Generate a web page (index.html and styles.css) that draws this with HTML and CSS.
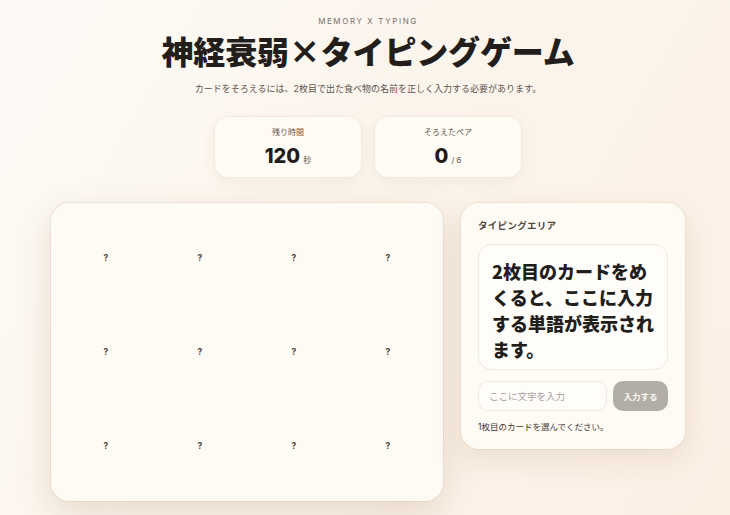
FILE: index.html
```html
<!DOCTYPE html>
<html lang="ja">
<head>
<meta charset="utf-8">
<title>神経衰弱×タイピングゲーム</title>
<link rel="stylesheet" href="styles.css">
</head>
<body>
<div class="page">
  <header class="header">
    <p class="eyebrow">MEMORY X TYPING</p>
    <h1 class="title">神経衰弱×タイピングゲーム</h1>
    <p class="lead">カードをそろえるには、2枚目で出た食べ物の名前を正しく入力する必要があります。</p>
  </header>

  <section class="stats">
    <div class="stat">
      <div class="stat-label">残り時間</div>
      <div class="stat-value">120<span class="stat-unit">秒</span></div>
    </div>
    <div class="stat">
      <div class="stat-label">そろえたペア</div>
      <div class="stat-value">0<span class="stat-unit">/ 6</span></div>
    </div>
  </section>

  <main class="layout">
    <section class="board">
      <div class="cell">?</div><div class="cell">?</div><div class="cell">?</div><div class="cell">?</div>
      <div class="cell">?</div><div class="cell">?</div><div class="cell">?</div><div class="cell">?</div>
      <div class="cell">?</div><div class="cell">?</div><div class="cell">?</div><div class="cell">?</div>
    </section>

    <aside class="panel">
      <h2 class="panel-title">タイピングエリア</h2>
      <div class="word-box">2枚目のカードをめくると、ここに入力する単語が表示されます。</div>
      <div class="input-row">
        <input class="text-input" type="text" placeholder="ここに文字を入力">
        <button class="submit" type="button">入力する</button>
      </div>
      <p class="status">1枚目のカードを選んでください。</p>
    </aside>
  </main>
</div>
</body>
</html>
```

FILE: styles.css
```css
* { box-sizing: border-box; }

html, body {
  margin: 0;
  height: 100%;
}

body {
  font-family: "Inter", "Noto Sans CJK JP", sans-serif;
  color: #2a2522;
  background: linear-gradient(120deg, #fdfbf7 0%, #fcf6ee 35%, #fcf0e5 100%);
  overflow: hidden;
}

.page {
  padding-left: 6px;
  padding-top: 16px;
}

.header {
  text-align: center;
}

.eyebrow {
  margin: 0;
  font-size: 8px;
  line-height: 10px;
  letter-spacing: 1.6px;
  color: #777069;
}

.title {
  margin: 4px 0 0;
  font-family: "Noto Sans CJK JP", sans-serif;
  font-size: 32px;
  line-height: 40px;
  font-weight: 900;
  color: #221e1b;
  letter-spacing: -0.15px;
}

.lead {
  margin: 13px 0 0;
  font-size: 9px;
  line-height: 12px;
  color: #5a534d;
}

.stats {
  display: flex;
  justify-content: center;
  gap: 12px;
  margin-top: 21px;
}

.stat {
  width: 148px;
  height: 62px;
  background: #fefaf4;
  border: 1px solid #f3ebe2;
  border-radius: 14px;
  box-shadow: 0 4px 14px rgba(150, 110, 70, 0.08);
  text-align: center;
  padding-top: 9px;
}

.stat-label {
  font-size: 8px;
  line-height: 12px;
  color: #5f5852;
}

.stat-value {
  margin-top: 6px;
  font-size: 20px;
  line-height: 24px;
  font-weight: 800;
  color: #201c19;
}

.stat-unit {
  font-size: 8px;
  font-weight: 400;
  color: #5f5852;
  margin-left: 3px;
}

.layout {
  display: grid;
  grid-template-columns: 392px 224px;
  gap: 18px;
  justify-content: center;
  align-items: start;
  margin-top: 25px;
}

.board {
  display: grid;
  grid-template-columns: repeat(4, 86px);
  grid-auto-rows: 86px;
  gap: 8px;
  padding: 12px;
  background: #fefaf4;
  border-radius: 18px;
  box-shadow: 0 12px 36px rgba(150, 110, 70, 0.2), 0 0 0 1px rgba(238, 226, 214, 0.7);
}

.cell {
  display: flex;
  align-items: center;
  justify-content: center;
  font-size: 8.5px;
  font-weight: 700;
  color: #4a4540;
}

.panel {
  background: #fefaf4;
  border-radius: 18px;
  padding: 17px 17px 16px;
  box-shadow: 0 10px 30px rgba(150, 110, 70, 0.16), 0 0 0 1px rgba(238, 226, 214, 0.7);
}

.panel-title {
  margin: 0;
  font-size: 9.5px;
  line-height: 12px;
  font-weight: 700;
  color: #4f4843;
  letter-spacing: 0.3px;
}

.word-box {
  margin-top: 12px;
  height: 126px;
  padding: 13px 12px 9px 13px;
  background: #fffdf9;
  border: 1px solid #f1e8de;
  border-radius: 14px;
  font-family: "Noto Sans CJK JP", sans-serif;
  font-size: 18px;
  line-height: 26px;
  font-weight: 800;
  color: #221e1b;
}

.input-row {
  display: flex;
  gap: 6px;
  margin-top: 11px;
}

.text-input {
  width: 129px;
  height: 30px;
  padding: 0 10px;
  border: 1px solid #f1e8de;
  border-radius: 10px;
  background: #fffdf9;
  font-family: inherit;
  font-size: 9.5px;
  color: #333;
  outline: none;
}

.text-input::placeholder {
  color: #a59e97;
}

.submit {
  width: 55px;
  height: 30px;
  border: none;
  border-radius: 10px;
  background: #b2ada7;
  color: #fbf8f4;
  font-family: inherit;
  font-size: 8.5px;
  font-weight: 700;
  padding: 0;
}

.status {
  margin: 10px 0 0;
  font-size: 8.5px;
  line-height: 12px;
  color: #3d3833;
}
```
